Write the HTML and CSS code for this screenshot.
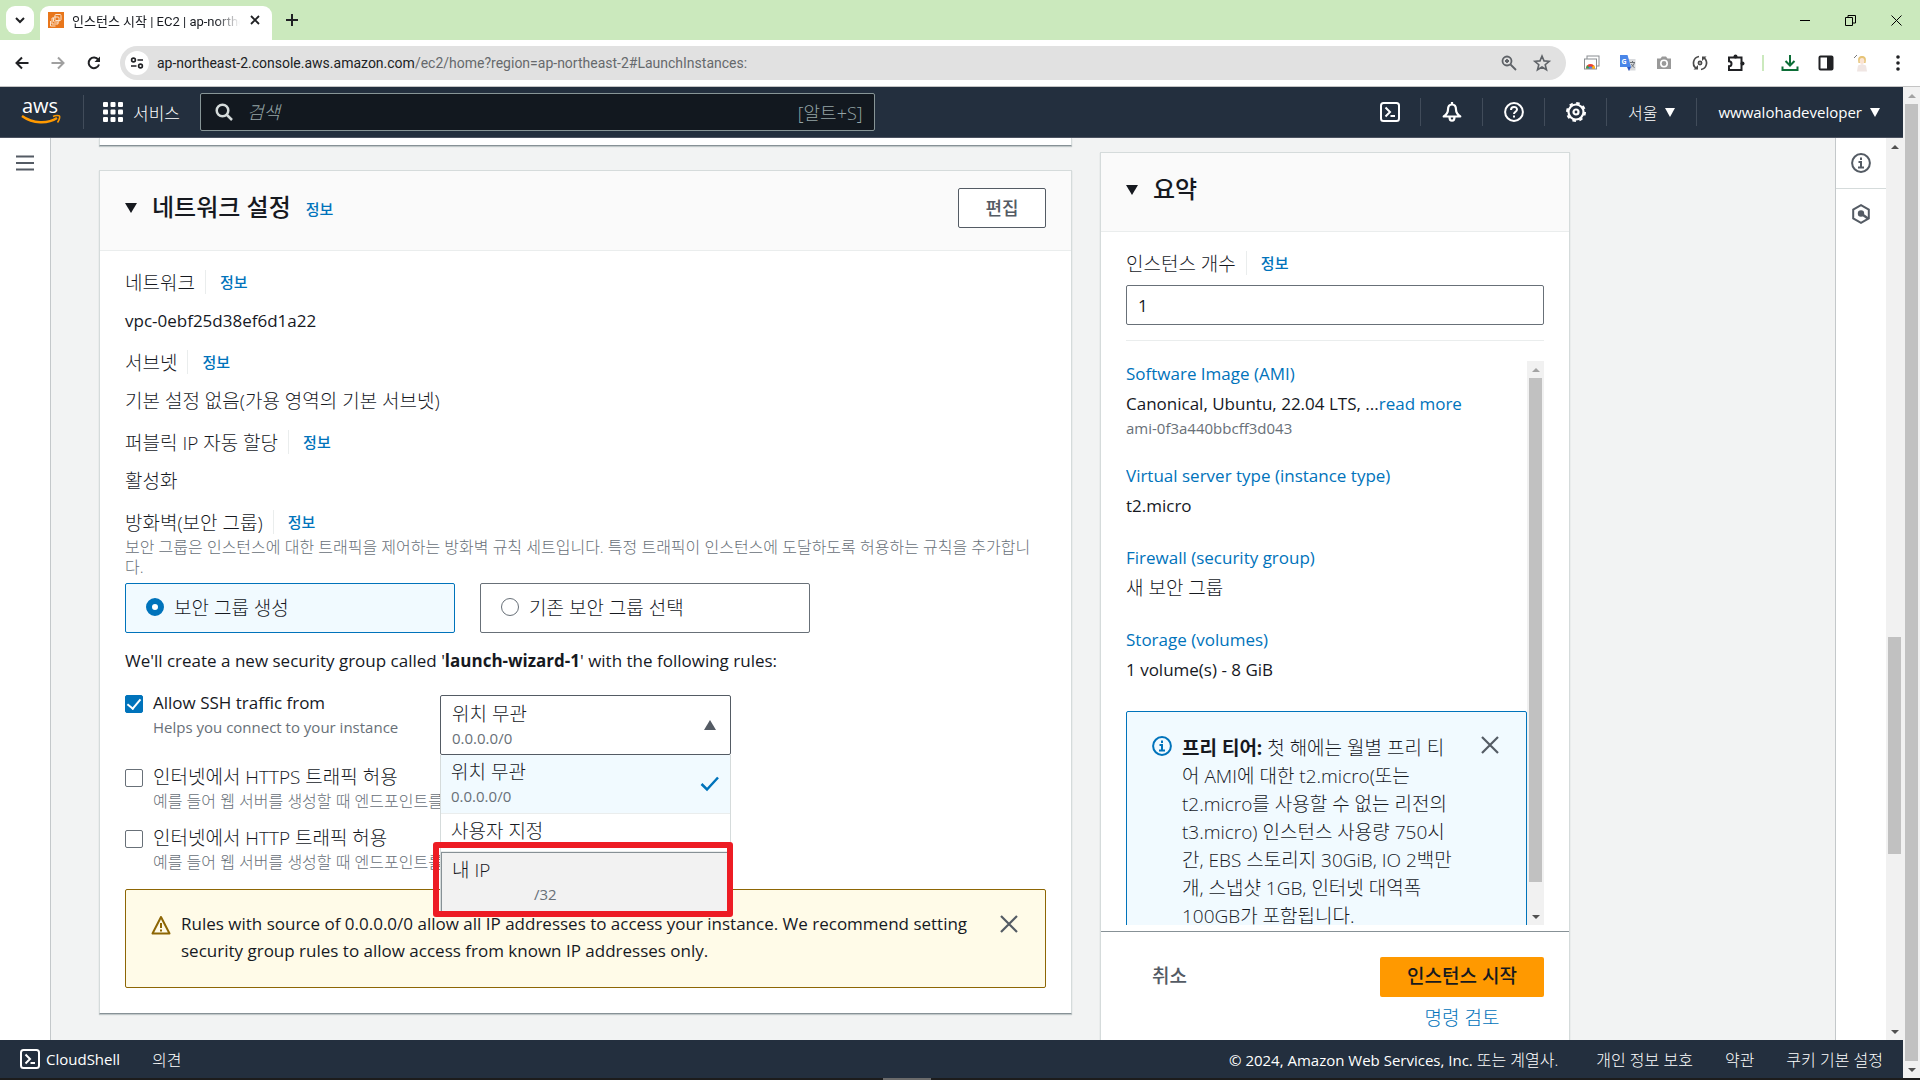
FILE: index.html
```html
<!DOCTYPE html>
<html lang="ko">
<head>
    <meta charset="UTF-8">
    <meta name="viewport" content="width=device-width, initial-scale=1.0">
    <title>인스턴스 시작 | EC2 | ap-northeast-2</title>
    <link rel="stylesheet" href="styles.css">
</head>
<body>
    <!-- Browser tabs -->
    <div class="tab-strip">
        <button class="tab-search" aria-label="탭 검색">
            <svg width="16" height="16" viewBox="0 0 16 16"><path d="M4 6l4 4 4-4" fill="none" stroke="#202124" stroke-width="2"/></svg>
        </button>
        <div class="tab">
            <svg width="16" height="16" viewBox="0 0 16 16"><rect width="16" height="16" fill="#e8761b"/><g fill="none" stroke="#fbe3cc"><rect x="7" y="2.500" width="6" height="6" rx="1"/><path d="M5 6H4v6h6v-2"/><path d="M2.500 9v5h5"/><rect x="5.500" y="5" width="5.500" height="5" rx="1"/></g></svg>
            <span class="tab-title">인스턴스 시작 | EC2 | ap-northeast-2</span>
            <button class="tab-close" aria-label="탭 닫기">
                <svg width="10" height="10" viewBox="0 0 10 10"><path d="M1 1l8 8M9 1L1 9" stroke="#202124" stroke-width="1.800"/></svg>
            </button>
        </div>
        <button class="new-tab" aria-label="새 탭">
            <svg width="12" height="12" viewBox="0 0 12 12"><path d="M6 0v12M0 6h12" stroke="#202124" stroke-width="2"/></svg>
        </button>
        <div class="window-buttons">
            <button aria-label="최소화"><svg width="10" height="10" viewBox="0 0 10 10"><path d="M0 5.500h10" stroke="#000"/></svg></button>
            <button aria-label="이전 크기로"><svg width="11" height="11" viewBox="0 0 11 11"><path d="M.5 2.500h7v8h-7zM3 2.500V.5h7.500v7.500H8" fill="none" stroke="#000"/></svg></button>
            <button aria-label="닫기"><svg width="11" height="11" viewBox="0 0 11 11"><path d="M.5.5l10 10M10.500.5l-10 10" stroke="#000"/></svg></button>
        </div>
    </div>

    <!-- Browser toolbar -->
    <div class="toolbar">
        <button aria-label="뒤로"><svg width="16" height="16" viewBox="0 0 16 16"><path d="M14.500 8H3M8 2.500L2.500 8 8 13.500" fill="none" stroke="#202124" stroke-width="2"/></svg></button>
        <button aria-label="앞으로"><svg width="16" height="16" viewBox="0 0 16 16"><path d="M1.500 8H13M8 2.500L13.500 8 8 13.500" fill="none" stroke="#a0a0a0" stroke-width="2"/></svg></button>
        <button aria-label="새로고침"><svg width="16" height="16" viewBox="0 0 16 16"><path d="M13 9.500A5.300 5.300 0 1 1 12.300 4.800" fill="none" stroke="#202124" stroke-width="2"/><path d="M14 1.500V7H8.500z" fill="#202124"/></svg></button>
        <div class="url-bar">
            <button class="site-info" aria-label="사이트 정보">
                <svg width="14" height="12" viewBox="0 0 14 12" fill="none" stroke="#202124" stroke-width="1.600"><circle cx="3.500" cy="3" r="1.900"/><path d="M7.500 3H13M1 9h5.500"/><circle cx="10.500" cy="9" r="1.900"/></svg>
            </button>
            <span class="url"><b>ap-northeast-2.console.aws.amazon.com</b>/ec2/home?region=ap-northeast-2#LaunchInstances:</span>
            <button aria-label="확대"><svg width="16" height="16" viewBox="0 0 16 16" fill="none" stroke="#5f6368" stroke-width="1.800"><circle cx="6" cy="6" r="4.500"/><path d="M9.500 9.500L15 15M4 6h4M6 4v4"/></svg></button>
            <button aria-label="북마크"><svg width="18" height="18" viewBox="0 0 18 18"><path d="M9 2l2 4.900 5.200.4-4 3.400 1.300 5.100L9 13l-4.500 2.800 1.300-5.100-4-3.400L7 6.900z" fill="none" stroke="#5f6368" stroke-width="1.600"/></svg></button>
        </div>
        <div class="extensions">
            <button aria-label="스크린샷"><svg width="18" height="18" viewBox="0 0 18 18"><rect x="4" y="2" width="12" height="10" fill="#fff" stroke="#8a8d91"/><rect x="1.500" y="5" width="12" height="10" fill="#fff" stroke="#8a8d91"/><path d="M3 14.500a4.500 4.500 0 0 1 9 0z" fill="#ea4335"/><path d="M3 14.500a4.500 4.500 0 0 1 1.500-3.300L7 14.500z" fill="#34a853"/><path d="M12 14.500a4.500 4.500 0 0 0-1.500-3.300L8 14.500z" fill="#fbbc04"/><path d="M5.500 14.500a2 2 0 0 1 4 0z" fill="#4285f4"/></svg></button>
            <button aria-label="번역"><svg width="18" height="18" viewBox="0 0 18 18"><path d="M8 5h8.500v11.500H9z" fill="#d8dadd"/><path d="M1 1h7.500l3.500 12H1z" fill="#4a86e8"/><path d="M8 13h4l-2 4z" fill="#2a56c6"/><text x="2.500" y="9.500" font-size="7" font-weight="700" fill="#fff">G</text><path d="M11 8.500h5M13.500 7v1.500M15.500 8.500c-.5 2-2 4-3 4.500M12.500 10c.5 1.500 2 3 3 3.500" fill="none" stroke="#6b7075"/></svg></button>
            <button aria-label="캡처"><svg width="16" height="16" viewBox="0 0 16 16"><path d="M1 3.500h3.500L6 1.500h4l1.500 2H15V14H1z" fill="#999"/><circle cx="8" cy="8.500" r="3.200" fill="none" stroke="#fff" stroke-width="1.600"/></svg></button>
            <button aria-label="새로고침 도구"><svg width="18" height="18" viewBox="0 0 18 18" fill="none" stroke="#4a4a4a" stroke-width="1.700"><path d="M8 2.500A6.600 6.600 0 0 0 5 14.200"/><path d="M10 15.500A6.600 6.600 0 0 0 13 3.800"/><path d="M2.500 15.500h4.500V11zM15.500 2.500H11V7z" fill="#4a4a4a" stroke="none"/><circle cx="9" cy="9" r="1.600"/></svg></button>
            <button aria-label="확장 프로그램"><svg width="18" height="18" viewBox="0 0 18 18"><path d="M2 3.500h12.500v12.500H2v-3.700a2.500 2.500 0 0 0 0-5z" fill="none" stroke="#202124" stroke-width="2"/><circle cx="8.500" cy="2.500" r="2" fill="#202124"/><circle cx="15.500" cy="9.500" r="2" fill="#202124"/></svg></button>
            <span class="toolbar-divider"></span>
            <button aria-label="다운로드"><svg width="18" height="18" viewBox="0 0 18 18" fill="none" stroke="#0d6e37" stroke-width="2"><path d="M9 1v10M4.500 7L9 11.500 13.500 7M1.500 12.500V16h15v-3.500"/></svg></button>
            <button aria-label="측면 패널"><svg width="16" height="16" viewBox="0 0 16 16"><rect x="1.500" y="1.500" width="13" height="13" rx="1" fill="none" stroke="#202124" stroke-width="2"/><path d="M9 1h6v14H9z" fill="#202124"/></svg></button>
            <button aria-label="프로필"><svg width="18" height="18" viewBox="0 0 18 18"><path d="M1 4l3-3" stroke="#777"/><path d="M5.500 9c-1-5 0-7 3.500-7s4.500 2 3.500 7z" fill="#e6c478"/><ellipse cx="9" cy="7" rx="2.400" ry="3" fill="#fbe4d3"/><path d="M4 17.500l1-6 4-1.500 4 1.500 1 6z" fill="#f0e6e3"/></svg></button>
            <button aria-label="메뉴"><svg width="4" height="18" viewBox="0 0 4 18" fill="#202124"><circle cx="2" cy="3" r="1.800"/><circle cx="2" cy="9" r="1.800"/><circle cx="2" cy="15" r="1.800"/></svg></button>
        </div>
    </div>

    <div class="viewport">
        <div class="console">
            <!-- AWS navigation -->
            <header class="aws-header">
                <a class="logo" href="#" aria-label="AWS">
                    <svg width="40" height="34" viewBox="0 0 40 34"><text x="19" y="18" text-anchor="middle" font-size="20" font-weight="500" fill="#fff">aws</text><path d="M1 21c11 8 26 8 35 2" fill="none" stroke="#f90" stroke-width="2.400"/><path d="M32 21.500c3-1.500 6-1 6.500-.5s0 4-2 6.500" fill="none" stroke="#f90" stroke-width="1.600"/></svg>
                </a>
                <button class="services">
                    <svg width="20" height="20" viewBox="0 0 20 20" fill="#fff"><rect width="5" height="5" rx="1"/><rect x="7.500" width="5" height="5" rx="1"/><rect x="15" width="5" height="5" rx="1"/><rect y="7.500" width="5" height="5" rx="1"/><rect x="7.500" y="7.500" width="5" height="5" rx="1"/><rect x="15" y="7.500" width="5" height="5" rx="1"/><rect y="15" width="5" height="5" rx="1"/><rect x="7.500" y="15" width="5" height="5" rx="1"/><rect x="15" y="15" width="5" height="5" rx="1"/></svg>
                    서비스
                </button>
                <label class="search">
                    <svg width="18" height="18" viewBox="0 0 18 18" fill="none" stroke="#d5dbdb" stroke-width="2.500"><circle cx="7.500" cy="7.500" r="5.800"/><path d="M11.500 11.500L17 17"/></svg>
                    <input type="search" placeholder="검색" aria-label="검색">
                    <span>[알트+S]</span>
                </label>
                <div class="header-tools">
                    <button aria-label="CloudShell"><svg width="20" height="20" viewBox="0 0 20 20" fill="none" stroke="#fff" stroke-width="2"><rect x="1" y="1" width="18" height="18" rx="2.500"/><path d="M5.500 5.500L10 10l-4.500 4.500M10.500 14H15"/></svg></button>
                    <button aria-label="알림"><svg width="20" height="20" viewBox="0 0 20 20" fill="none" stroke="#fff" stroke-width="2.200"><path d="M10 2.500c-3 0-4 2.500-4 5 0 3-1.500 5-4.300 7h16.600C15.500 12.500 14 10.500 14 7.500c0-2.500-1-5-4-5zM10 0v3M7.500 15c0 5 5 5 5 0" stroke-linejoin="round"/></svg></button>
                    <button aria-label="도움말"><svg width="20" height="20" viewBox="0 0 20 20" fill="none" stroke="#fff" stroke-width="2"><circle cx="10" cy="10" r="8.900"/><path d="M7 8c0-4 6-4 6-.5 0 2-3 2.500-3 4.500"/><path d="M10 13.500v2"/></svg></button>
                    <button aria-label="설정"><svg width="20" height="20" viewBox="0 0 20 20" fill="none" stroke="#fff"><circle cx="10" cy="10" r="7.500" stroke-width="2.200"/><circle cx="10" cy="10" r="9" stroke-width="2" stroke-dasharray="3.530 3.530"/><circle cx="10" cy="10" r="2.500" stroke-width="2.200"/></svg></button>
                    <button class="region">서울 <span class="caret"></span></button>
                    <button class="account">wwwalohadeveloper <span class="caret"></span></button>
                </div>
            </header>

            <div class="content">
                <nav class="side-nav">
                    <button aria-label="메뉴 열기"><svg width="18" height="16" viewBox="0 0 18 16"><path d="M0 1.500h18M0 8h18M0 14.500h18" stroke="#545b64" stroke-width="2"/></svg></button>
                </nav>

                <main class="wizard">
                    <div class="steps">
                        <div class="card card-previous"></div>

                        <section class="card network">
                            <header class="card-header">
                                <span class="caret"></span>
                                <h2>네트워크 설정</h2>
                                <a href="#" class="info">정보</a>
                                <button class="btn btn-edit">편집</button>
                            </header>
                            <div class="card-body">
                                <div class="field">
                                    <div class="field-label">네트워크 <a href="#" class="info">정보</a></div>
                                    <div class="field-value latin">vpc-0ebf25d38ef6d1a22</div>
                                </div>
                                <div class="field">
                                    <div class="field-label">서브넷 <a href="#" class="info">정보</a></div>
                                    <div class="field-value">기본 설정 없음(가용 영역의 기본 서브넷)</div>
                                </div>
                                <div class="field">
                                    <div class="field-label">퍼블릭 IP 자동 할당 <a href="#" class="info">정보</a></div>
                                    <div class="field-value">활성화</div>
                                </div>
                                <div class="field-label">방화벽(보안 그룹) <a href="#" class="info">정보</a></div>
                                <p class="description">보안 그룹은 인스턴스에 대한 트래픽을 제어하는 방화벽 규칙 세트입니다. 특정 트래픽이 인스턴스에 도달하도록 허용하는 규칙을 추가합니다.</p>

                                <div class="tiles">
                                    <label class="tile selected"><input type="radio" name="sg" checked> 보안 그룹 생성</label>
                                    <label class="tile"><input type="radio" name="sg"> 기존 보안 그룹 선택</label>
                                </div>

                                <p class="latin rules-intro">We'll create a new security group called '<b>launch-wizard-1</b>' with the following rules:</p>

                                <div class="rule rule-ssh">
                                    <input type="checkbox" id="ssh" checked>
                                    <div class="rule-text">
                                        <label for="ssh" class="latin">Allow SSH traffic from</label>
                                        <small>Helps you connect to your instance</small>
                                    </div>
                                    <div class="source">
                                        <button class="source-trigger" aria-haspopup="listbox" aria-expanded="true">
                                            <span>위치 무관</span>
                                            <small>0.0.0.0/0</small>
                                            <i class="caret caret-up"></i>
                                        </button>
                                        <ul class="source-menu" role="listbox">
                                            <li class="active" role="option" aria-selected="true">
                                                <span>위치 무관</span>
                                                <small>0.0.0.0/0</small>
                                                <svg width="20" height="16" viewBox="0 0 20 16"><path d="M1.500 8l5.500 5.500L18 1.500" fill="none" stroke="#0073bb" stroke-width="2.500"/></svg>
                                            </li>
                                            <li role="option"><span>사용자 지정</span></li>
                                            <li class="hovered" role="option">
                                                <span>내 IP</span>
                                                <small class="masked">/32</small>
                                            </li>
                                        </ul>
                                        <div class="highlight"></div>
                                    </div>
                                </div>
                                <div class="rule">
                                    <input type="checkbox" id="https">
                                    <div class="rule-text">
                                        <label for="https">인터넷에서 HTTPS 트래픽 허용</label>
                                        <small class="ko">예를 들어 웹 서버를 생성할 때 엔드포인트를</small>
                                    </div>
                                </div>
                                <div class="rule">
                                    <input type="checkbox" id="http">
                                    <div class="rule-text">
                                        <label for="http">인터넷에서 HTTP 트래픽 허용</label>
                                        <small class="ko">예를 들어 웹 서버를 생성할 때 엔드포인트를</small>
                                    </div>
                                </div>

                                <div class="alert alert-warning">
                                    <svg width="20" height="20" viewBox="0 0 20 20" fill="none" stroke="#8d6605" stroke-width="2"><path d="M10 2L1.500 18.500h17z" stroke-linejoin="round"/><path d="M10 8v5M10 14.500v2"/></svg>
                                    <p class="latin">Rules with source of 0.0.0.0/0 allow all IP addresses to access your instance. We recommend setting security group rules to allow access from known IP addresses only.</p>
                                    <button aria-label="닫기"><svg width="18" height="18" viewBox="0 0 18 18"><path d="M1 1l16 16M17 1L1 17" stroke="#545b64" stroke-width="2.200"/></svg></button>
                                </div>
                            </div>
                        </section>
                    </div>

                    <aside class="card summary">
                        <header class="card-header">
                            <span class="caret"></span>
                            <h2>요약</h2>
                        </header>
                        <div class="summary-body">
                            <div class="field-label"><label for="count">인스턴스 개수</label> <a href="#" class="info">정보</a></div>
                            <input type="text" id="count" class="count latin" value="1">
                            <hr>
                            <div class="summary-scroll">
                                <div class="summary-list">
                                    <div class="item">
                                        <a href="#">Software Image (AMI)</a>
                                        <p>Canonical, Ubuntu, 22.04 LTS, ...<a href="#">read more</a></p>
                                        <small>ami-0f3a440bbcff3d043</small>
                                    </div>
                                    <div class="item">
                                        <a href="#">Virtual server type (instance type)</a>
                                        <p>t2.micro</p>
                                    </div>
                                    <div class="item">
                                        <a href="#">Firewall (security group)</a>
                                        <p class="ko">새 보안 그룹</p>
                                    </div>
                                    <div class="item">
                                        <a href="#">Storage (volumes)</a>
                                        <p>1 volume(s) - 8 GiB</p>
                                    </div>
                                    <div class="alert alert-info">
                                        <svg width="20" height="20" viewBox="0 0 20 20" fill="none" stroke="#0073bb" stroke-width="2"><circle cx="10" cy="10" r="8.900"/><path d="M10 4.500v2.500M7.500 9H10v5.500M7 14.500h6"/></svg>
                                        <p><b>프리 티어:</b> 첫 해에는 월별 프리 티어 AMI에 대한 t2.micro(또는 t2.micro를 사용할 수 없는 리전의 t3.micro) 인스턴스 사용량 750시간, EBS 스토리지 30GiB, IO 2백만 개, 스냅샷 1GB, 인터넷 대역폭 100GB가 포함됩니다.</p>
                                        <button aria-label="닫기"><svg width="18" height="18" viewBox="0 0 18 18"><path d="M1 1l16 16M17 1L1 17" stroke="#545b64" stroke-width="2.200"/></svg></button>
                                    </div>
                                </div>
                                <div class="scrollbar scrollbar-summary">
                                    <span class="arrow-up muted"></span>
                                    <div class="track"><div class="thumb"></div></div>
                                    <span class="arrow-down"></span>
                                </div>
                            </div>
                        </div>
                        <footer class="summary-footer">
                            <button class="btn-cancel">취소</button>
                            <div class="launch">
                                <button class="btn btn-primary">인스턴스 시작</button>
                                <a href="#">명령 검토</a>
                            </div>
                        </footer>
                    </aside>
                </main>

                <aside class="help-panel">
                    <button aria-label="정보"><svg width="20" height="20" viewBox="0 0 20 20" fill="none" stroke="#545b64" stroke-width="2"><circle cx="10" cy="10" r="8.900"/><path d="M10 4.500v2.500M7.500 9H10v5.500M7 14.500h6"/></svg></button>
                    <button aria-label="자습서"><svg width="18" height="20" viewBox="0 0 18 20" fill="none" stroke="#545b64" stroke-width="2"><path d="M9 1.200l7.800 4.300v9L9 18.800l-7.800-4.300v-9z"/><circle cx="9" cy="9.500" r="2.200" fill="#545b64"/><path d="M9 9.500l7 5" stroke-width="2.500"/></svg></button>
                </aside>

                <div class="scrollbar scrollbar-content">
                    <span class="arrow-up"></span>
                    <div class="track"><div class="thumb"></div></div>
                    <span class="arrow-down"></span>
                </div>
            </div>

            <footer class="aws-footer">
                <a href="#" class="cloudshell"><svg width="20" height="20" viewBox="0 0 20 20" fill="none" stroke="#fff" stroke-width="2"><rect x="1" y="1" width="18" height="18" rx="2.500"/><path d="M5.500 5.500L10 10l-4.500 4.500M10.500 14H15"/></svg> CloudShell</a>
                <a href="#" class="ko">의견</a>
                <span class="copyright">© 2024, Amazon Web Services, Inc. <span class="ko">또는 계열사.</span></span>
                <a href="#" class="ko">개인 정보 보호</a>
                <a href="#" class="ko">약관</a>
                <a href="#" class="ko">쿠키 기본 설정</a>
            </footer>
        </div>

        <div class="scrollbar scrollbar-page">
            <span class="arrow-up muted"></span>
            <div class="track"><div class="thumb"></div></div>
            <span class="arrow-down"></span>
        </div>
    </div>
    <div class="taskbar"><span></span></div>
</body>
</html>
```
FILE: styles.css
```css
* {
    box-sizing: border-box;
}

body {
    margin: 0;
    height: 100vh;
    display: flex;
    flex-direction: column;
    overflow: hidden;
    font-family: "Open Sans", "Noto Sans CJK KR", sans-serif;
    font-size: 17px;
    color: #16191f;
    background: #f2f3f3;
}

h2, p, ul {
    margin: 0;
    padding: 0;
}

button {
    font: inherit;
    color: inherit;
    padding: 0;
    border: none;
    background: none;
    display: flex;
    align-items: center;
    justify-content: center;
    flex-shrink: 0;
}

a {
    color: #0073bb;
    text-decoration: none;
}

svg {
    display: block;
    flex-shrink: 0;
    overflow: visible;
}

.latin {
    font-size: 17px;
    font-weight: 400;
}

.ko {
    font-weight: 300;
}

.caret {
    flex-shrink: 0;
    border: 6px solid transparent;
    border-top: 10px solid currentColor;
    border-bottom: none;
}

.caret-up {
    border-top: none;
    border-bottom: 10px solid #545b64;
}

/* Tabs */
.tab-strip {
    height: 40px;
    flex-shrink: 0;
    display: flex;
    align-items: flex-start;
    padding: 6px 18px 0 6px;
    background: #cbe9bd;
    font-size: 13px;
}

.tab-search {
    width: 28px;
    height: 28px;
    border-radius: 9px;
    background: #fff;
}

.tab {
    width: 232px;
    height: 34px;
    margin-left: 6px;
    padding: 0 10px 6px 8px;
    display: flex;
    align-items: center;
    gap: 8px;
    border-radius: 9px 9px 0 0;
    background: #fff;
}

.tab-title {
    flex: 1;
    font-family: Roboto, "Noto Sans CJK KR", sans-serif;
    font-size: 13px;
    white-space: nowrap;
    overflow: hidden;
    -webkit-mask-image: linear-gradient(90deg, #000 85%, transparent);
}

.tab-close {
    width: 14px;
}

.new-tab {
    height: 28px;
    margin-left: 14px;
}

.window-buttons {
    display: flex;
    margin-left: auto;
    gap: 35px;
    height: 28px;
}

/* Toolbar */
.toolbar {
    height: 47px;
    flex-shrink: 0;
    display: flex;
    align-items: center;
    gap: 20px;
    padding: 0 4px 0 14px;
    background: #fff;
    border-bottom: 1px solid #c4c4c4;
}

.url-bar {
    flex: 1;
    height: 34px;
    margin-left: -2px;
    display: flex;
    align-items: center;
    gap: 16px;
    padding: 0 15px 0 5px;
    border-radius: 17px;
    background: #e1e1e1;
}

.site-info {
    width: 24px;
    height: 24px;
    border-radius: 50%;
    background: #fff;
}

.url {
    flex: 1;
    margin-left: -8px;
    font-family: Roboto, sans-serif;
    font-size: 14px;
    color: #66696c;
    white-space: nowrap;
}

.url b {
    font-weight: 400;
    color: #202124;
}

.extensions {
    display: flex;
    align-items: center;
    margin-left: -12px;
}

.extensions button {
    width: 36px;
}

.toolbar-divider {
    width: 2px;
    height: 16px;
    margin: 0 8px;
    background: #cbe9bd;
}

.viewport {
    flex: 1;
    min-height: 0;
    display: flex;
}

.console {
    flex: 1;
    min-width: 0;
    display: flex;
    flex-direction: column;
}

/* AWS header */
.aws-header {
    height: 51px;
    flex-shrink: 0;
    display: flex;
    align-items: center;
    background: #232f3e;
    color: #fff;
    border-bottom: 1px solid #4b5260;
}

.logo {
    width: 84px;
    padding-left: 21px;
    border-right: 1px solid #414c5a;
}

.services {
    padding: 0 20px 0 19px;
    gap: 10px;
    font-weight: 300;
}

.search {
    width: 35.5%;
    height: 38px;
    display: flex;
    align-items: center;
    gap: 14px;
    padding: 0 12px 0 14px;
    border: 1px solid #879596;
    border-radius: 2px;
    background: #12181f;
    color: #95a5a6;
    font-weight: 300;
    font-size: 18px;
}

.search input {
    flex: 1;
    min-width: 0;
    padding: 0;
    border: none;
    background: none;
    color: #fff;
    font: inherit;
}

.search input::placeholder {
    color: #95a5a6;
    font-style: italic;
}

.header-tools {
    margin-left: auto;
    display: flex;
    align-items: center;
}

.header-tools button {
    height: 28px;
    padding: 0 20px 0 21px;
    gap: 8px;
    border-left: 1px solid #414c5a;
    font-size: 15px;
}

.header-tools button:first-child {
    border-left: none;
}

.header-tools .region {
    padding-right: 21px;
    font-weight: 300;
    font-size: 16px;
}

.header-tools .account {
    padding-right: 23px;
}

.header-tools .caret {
    border-width: 9px 5px 0;
}

/* Console body */
.content {
    flex: 1;
    min-height: 0;
    display: flex;
}

.side-nav {
    width: 51px;
    padding: 17px 16px;
    background: #fff;
    border-right: 1px solid #c4c8ca;
}

.wizard {
    flex: 1;
    min-width: 0;
    padding: 0 48px;
    display: grid;
    grid-template-columns: minmax(0, 973px) minmax(0, 470px);
    gap: 28px;
    overflow: hidden;
    font-weight: 300;
}

.steps {
    min-width: 0;
}

.card {
    background: #fff;
    border: 1px solid #d5dbdb;
    border-bottom-color: #879196;
    box-shadow: 0 1px 1px rgba(0, 28, 36, 0.2);
}

.card-previous {
    height: 8px;
    margin-bottom: 24px;
    border-top: none;
}

.card-header {
    height: 80px;
    display: flex;
    align-items: center;
    gap: 15px;
    padding: 0 25px 5px;
    background: #fafafa;
    border-bottom: 1px solid #eaeded;
}

.card-header h2 {
    padding-bottom: 2px;
    font-size: 24px;
    line-height: 30px;
    font-weight: 500;
}

.info {
    font-size: 15px;
    font-weight: 500;
}

.btn {
    height: 40px;
    padding-bottom: 2px;
    border-radius: 2px;
    font-weight: 500;
}

.btn-edit {
    width: 88px;
    margin-left: auto;
    border: 1px solid #545b64;
    background: #fff;
    color: #545b64;
    font-size: 18px;
}

.card-body {
    padding: 18px 25px 25px;
}

.field {
    margin-bottom: 14px;
}

.field-label {
    display: flex;
    align-items: center;
    height: 26px;
    font-size: 19px;
}

.field-label .info {
    margin-left: 10px;
    padding-left: 14px;
    line-height: 24px;
    border-left: 1px solid #eaeded;
}

.field-value {
    margin-top: 12px;
    line-height: 28px;
    font-size: 19px;
}

.field-value.latin {
    font-size: 17px;
}

.description {
    margin: 2px 0 6px;
    font-size: 16px;
    line-height: 20px;
    color: #687078;
    word-break: break-all;
}

.tiles {
    display: grid;
    grid-template-columns: repeat(2, minmax(0, 330px));
    gap: 25px;
}

.tile {
    height: 50px;
    display: flex;
    align-items: center;
    gap: 10px;
    padding: 0 20px 2px;
    border: 1px solid #687078;
    border-radius: 2px;
    font-size: 19px;
}

.tile.selected {
    border-color: #0073bb;
    background: #f1faff;
}

.tile input, .rule input {
    appearance: none;
    width: 18px;
    height: 18px;
    margin: 0;
    flex-shrink: 0;
    border: 1px solid #687078;
    background: #fff;
}

.tile input {
    border-radius: 50%;
}

.tile input:checked {
    border: 6px solid #0073bb;
}

.rules-intro {
    margin: 14px 0 16px;
    line-height: 28px;
}

.rule {
    display: flex;
    gap: 10px;
    margin-bottom: 14px;
}

.rule-ssh {
    margin-bottom: 10px;
}

.rule input {
    margin-top: 4px;
    border-radius: 2px;
}

.rule input:checked {
    border-color: #0073bb;
    background: #0073bb;
    display: grid;
    place-items: center;
}

.rule input:checked::before {
    content: "";
    width: 6px;
    height: 11px;
    margin-bottom: 3px;
    border: solid #fff;
    border-width: 0 2px 2px 0;
    transform: rotate(40deg);
}

.rule-text {
    width: 277px;
    white-space: nowrap;
}

.rule-text label {
    display: block;
    line-height: 24px;
    font-size: 19px;
}

.rule-text .latin {
    font-size: 17px;
}

small {
    display: block;
    font-size: 15px;
    line-height: 22px;
    font-weight: 400;
    color: #687078;
}

.rule-text small {
    margin-top: 1px;
}

small.ko {
    font-size: 16px;
    font-weight: 300;
}

.source {
    position: relative;
    width: 291px;
    padding-top: 4px;
}

.source-trigger {
    position: relative;
    width: 100%;
    height: 60px;
    display: block;
    padding: 3px 11px;
    text-align: left;
    border: 1px solid #545b64;
    border-radius: 2px;
    background: #fff;
}

.source span {
    display: block;
    font-size: 19px;
    line-height: 26px;
    font-weight: 300;
}

.source-trigger .caret-up {
    position: absolute;
    right: 14px;
    top: 24px;
}

.source-menu {
    position: absolute;
    z-index: 1;
    top: 64px;
    left: 0;
    width: 100%;
    list-style: none;
    border: solid #d5dbdb;
    border-width: 0 1px;
    background: #fff;
}

.source-menu li {
    position: relative;
    padding: 4px 10px 7px;
    border-bottom: 1px solid #eaeded;
}

.source-menu .active {
    background: #f1faff;
    padding-bottom: 6px;
}

.source-menu .active svg {
    position: absolute;
    right: 10px;
    top: 21px;
}

.source-menu .hovered {
    padding: 4px 10px 7px;
    border: 1px solid #879196;
    background: #f2f2f2;
}

.masked {
    padding-left: 82px;
}

.highlight {
    position: absolute;
    z-index: 2;
    top: 151px;
    left: -7px;
    right: -2px;
    height: 75px;
    border: 6px solid #ed1c24;
    border-radius: 3px;
}

.alert {
    display: flex;
    align-items: flex-start;
    border-radius: 2px;
}

.alert-warning {
    margin-top: 16px;
    padding: 20px 27px 23px 25px;
    gap: 10px;
    border: 1px solid #8d6605;
    background: #fffbe8;
}

.alert-warning svg {
    margin-top: 5px;
}

.alert-warning p {
    flex: 1;
    line-height: 27px;
}

/* Summary panel */
.summary {
    margin-top: 14px;
    display: flex;
    flex-direction: column;
    min-height: 0;
    border-bottom: none;
}

.summary .card-header {
    height: 79px;
    flex-shrink: 0;
}

.summary-body {
    flex: 1;
    min-height: 0;
    display: flex;
    flex-direction: column;
    padding: 18px 25px 6px;
}

.count {
    height: 40px;
    flex-shrink: 0;
    margin-top: 9px;
    padding: 0 11px;
    border: 1px solid #687078;
    border-radius: 2px;
    color: #16191f;
    font-family: inherit;
}

.summary hr {
    width: 100%;
    margin: 15px 0 20px;
    border: none;
    border-top: 1px solid #eaeded;
}

.summary-scroll {
    flex: 1;
    min-height: 0;
    display: flex;
}

.summary-list {
    flex: 1;
    min-width: 0;
    overflow: hidden;
    font-weight: 400;
}

.item {
    margin-bottom: 25px;
    line-height: 26px;
}

.item p {
    margin-top: 3px;
    line-height: 28px;
}

.item p.ko {
    font-size: 19px;
}

.item small {
    line-height: 20px;
}

.alert-info {
    height: 260px;
    margin-top: 27px;
    padding: 22px 27px 0 25px;
    gap: 10px;
    border: 1px solid #0073bb;
    background: #f1faff;
}

.alert-info p {
    width: 272px;
    margin-right: auto;
    font-size: 19px;
    font-weight: 300;
    line-height: 28px;
}

.alert-info b {
    font-weight: 700;
}

.alert-info svg {
    margin-top: 2px;
}

.summary-footer {
    height: 109px;
    flex-shrink: 0;
    display: flex;
    justify-content: space-between;
    align-items: flex-start;
    padding: 25px 25px 0 51px;
    border-top: 1px solid #879196;
}

.btn-cancel {
    height: 36px;
    color: #545b64;
    font-size: 19px;
    font-weight: 500;
}

.launch {
    text-align: center;
    font-size: 19px;
    line-height: 42px;
}

.btn-primary {
    width: 164px;
    background: #f90;
    font-size: 19px;
}

/* Right tools */
.help-panel {
    width: 51px;
    background: #fff;
    border-left: 1px solid #c4c8ca;
}

.help-panel button {
    width: 100%;
    height: 50px;
}

.help-panel button:first-child {
    height: 51px;
    border-bottom: 1px solid #d5dbdb;
}

/* Scrollbars */
.scrollbar {
    width: 17px;
    flex-shrink: 0;
    display: flex;
    flex-direction: column;
    align-items: center;
    background: #f1f1f1;
}

.track {
    flex: 1;
    width: 13px;
    display: flex;
    flex-direction: column;
}

.thumb {
    background: #c1c1c1;
}

.arrow-up, .arrow-down {
    margin: 7px 0 6px;
    border: 4px solid transparent;
    border-top: none;
    border-bottom-color: #505050;
}

.arrow-down {
    border-top: 4px solid #505050;
    border-bottom: none;
}

.muted {
    border-bottom-color: #a3a3a3;
}

.scrollbar-page .thumb {
    height: 100%;
}

.scrollbar-content .thumb {
    height: 25%;
    margin-top: auto;
    margin-bottom: 169px;
}

.scrollbar-summary .thumb {
    height: 95%;
}

/* Footer */
.aws-footer {
    height: 38px;
    flex-shrink: 0;
    display: flex;
    align-items: center;
    gap: 32px;
    padding: 0 20px;
    background: #232f3e;
    color: #fff;
    font-size: 15px;
}

.aws-footer a {
    color: #fff;
}

.aws-footer .ko {
    font-size: 16px;
}

.cloudshell {
    display: flex;
    align-items: center;
    gap: 6px;
}

.copyright {
    margin-left: auto;
    margin-right: 6px;
}

.taskbar {
    height: 2px;
    flex-shrink: 0;
    background: #1c1c1c;
}

.taskbar span {
    display: block;
    width: 48px;
    height: 2px;
    margin-left: 46%;
    background: #6b6b6b;
}
```
